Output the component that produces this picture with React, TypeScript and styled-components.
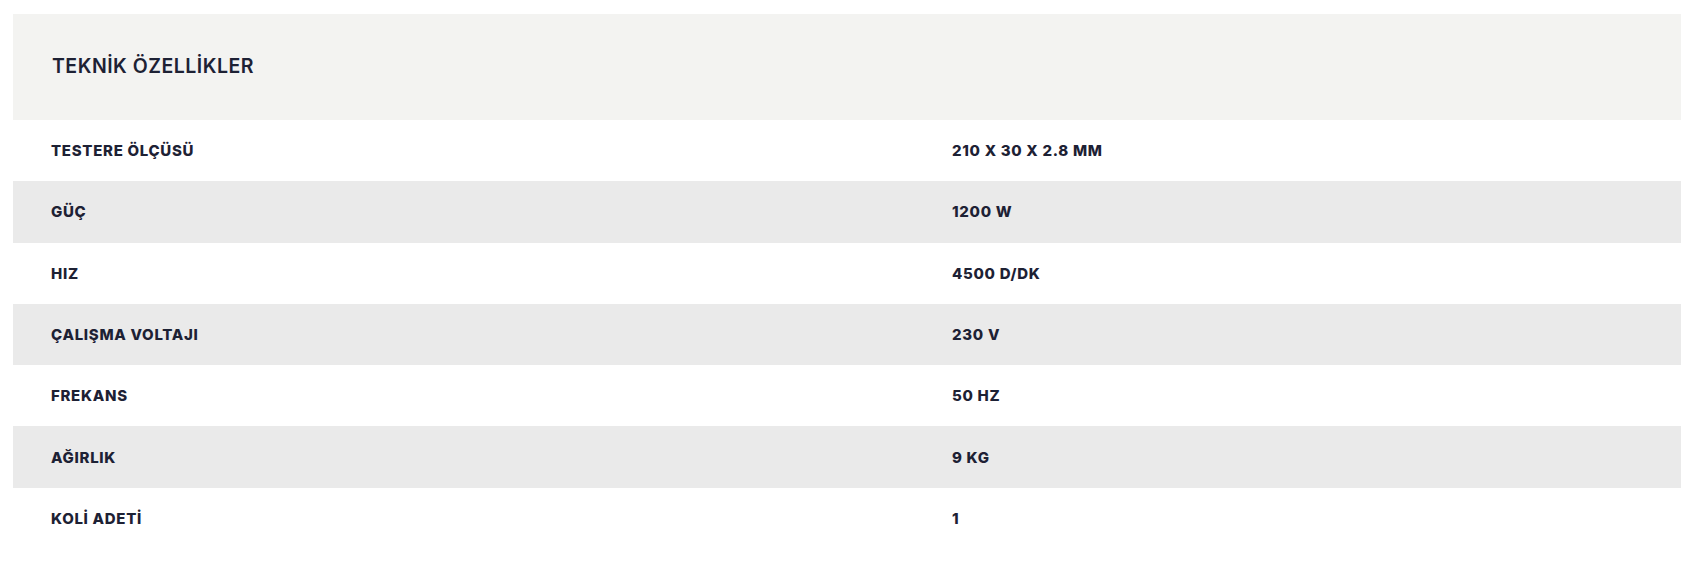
import React from "react";
import styled, { createGlobalStyle } from "styled-components";

const Global = createGlobalStyle`
  html, body { margin: 0; padding: 0; background: #ffffff; }
  body { font-family: "Inter", "Open Sans", sans-serif; overflow: hidden; }
`;

const Page = styled.div`
  padding: 14px 0 0 13px;
`;

const Table = styled.div`
  display: flex;
  flex-direction: column;
`;

const Header = styled.div`
  background: #f3f3f1;
  height: 106px;
  display: flex;
  align-items: center;
  padding: 0 0 3px 39px;
  box-sizing: border-box;
`;

const Title = styled.h2`
  margin: 0;
  font-family: "Inter", sans-serif;
  font-weight: 600;
  font-size: 19.5px;
  color: #1d2134;
  letter-spacing: 0.5px;
`;

const Row = styled.div<{ $shaded: boolean }>`
  display: grid;
  grid-template-columns: 901px 1fr;
  align-items: center;
  height: 61.3px;
  background: ${(p) => (p.$shaded ? "#eaeaea" : "#ffffff")};
`;

const Cell = styled.div`
  padding-left: 38px;
  font-family: "Inter", sans-serif;
  font-weight: 800;
  font-size: 15px;
  color: #1d2134;
  letter-spacing: 0.7px;
  text-transform: uppercase;
`;

const specs: [string, string][] = [
  ["TESTERE ÖLÇÜSÜ", "210 X 30 X 2.8 MM"],
  ["GÜÇ", "1200 W"],
  ["HIZ", "4500 D/DK"],
  ["ÇALIŞMA VOLTAJI", "230 V"],
  ["FREKANS", "50 HZ"],
  ["AĞIRLIK", "9 KG"],
  ["KOLİ ADETİ", "1"],
];

export default function App() {
  return (
    <Page>
      <Global />
      <Table>
        <Header>
          <Title>TEKNİK ÖZELLİKLER</Title>
        </Header>
        {specs.map(([k, v], i) => (
          <Row key={k} $shaded={i % 2 === 1}>
            <Cell>{k}</Cell>
            <Cell>{v}</Cell>
          </Row>
        ))}
      </Table>
    </Page>
  );
}
